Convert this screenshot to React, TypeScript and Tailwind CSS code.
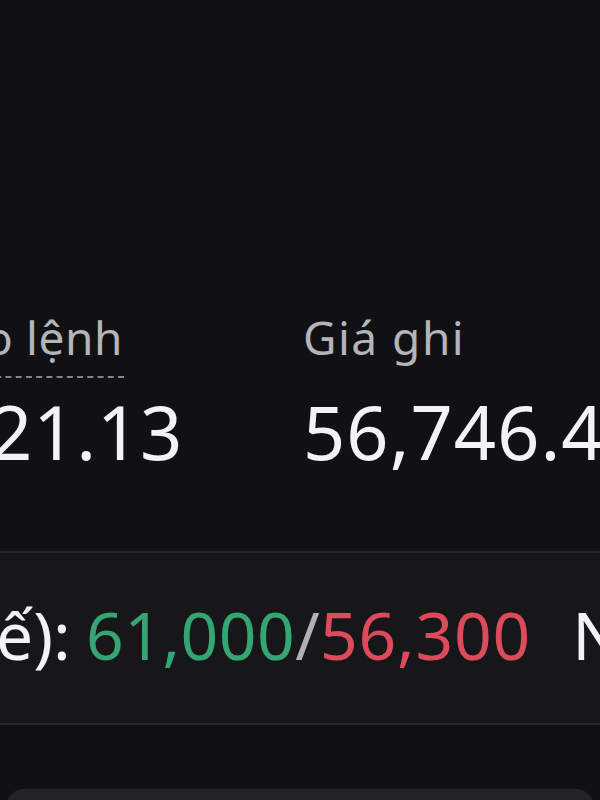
export default function App() {
  const font = { fontFamily: '"Noto Sans", "Open Sans", sans-serif' };

  return (
    <div
      className="w-[600px] h-[800px] overflow-hidden bg-[#111114] flex flex-col"
      style={font}
    >
      {/* price stats */}
      <div className="mt-[309px] flex">
        <div className="w-[303px] shrink-0 flex flex-col items-start">
          <div className="ml-[-15px] pr-[1px] pb-[11px] border-b-2 border-dashed border-[#85868b] text-[46px] leading-[56px] tracking-[0.6px] text-[#b3b5ba] whitespace-nowrap">
            o lệnh
          </div>
          <div className="ml-[-10px] mt-[17px] text-[74px] leading-[74px] tracking-[0.8px] text-[#f2f3f5] whitespace-nowrap">
            21.13
          </div>
        </div>
        <div className="flex flex-col items-start">
          <div className="text-[46px] leading-[56px] tracking-[1.5px] text-[#b3b5ba] whitespace-nowrap pb-[13px]">
            Giá ghi
          </div>
          <div className="mt-[17px] text-[74px] leading-[74px] tracking-[1px] text-[#f2f3f5] whitespace-nowrap">
            56,746.4
          </div>
        </div>
      </div>

      {/* 24h high / low band */}
      <div className="mt-[82px] h-[174px] shrink-0 bg-[#17171a] border-y-2 border-[#26262a] pt-[48px]">
        <div className="flex items-baseline whitespace-nowrap text-[66px] leading-[66px]">
          <span className="ml-[-4px] text-[#f2f3f5]">ế):&nbsp;</span>
          <span className="ml-[-2px] tracking-[0.5px] text-[#35a574]">61,000</span>
          <span className="text-[#b0b0b5]">/</span>
          <span className="tracking-[0.8px] text-[#dc4b5b]">56,300</span>
          <span className="ml-[41px] text-[#f2f3f5]">N</span>
        </div>
      </div>

      {/* bottom sheet edge */}
      <div className="mt-[64px] mx-[6px] h-[60px] shrink-0 rounded-t-[18px] bg-[#242428]" />
    </div>
  );
}
